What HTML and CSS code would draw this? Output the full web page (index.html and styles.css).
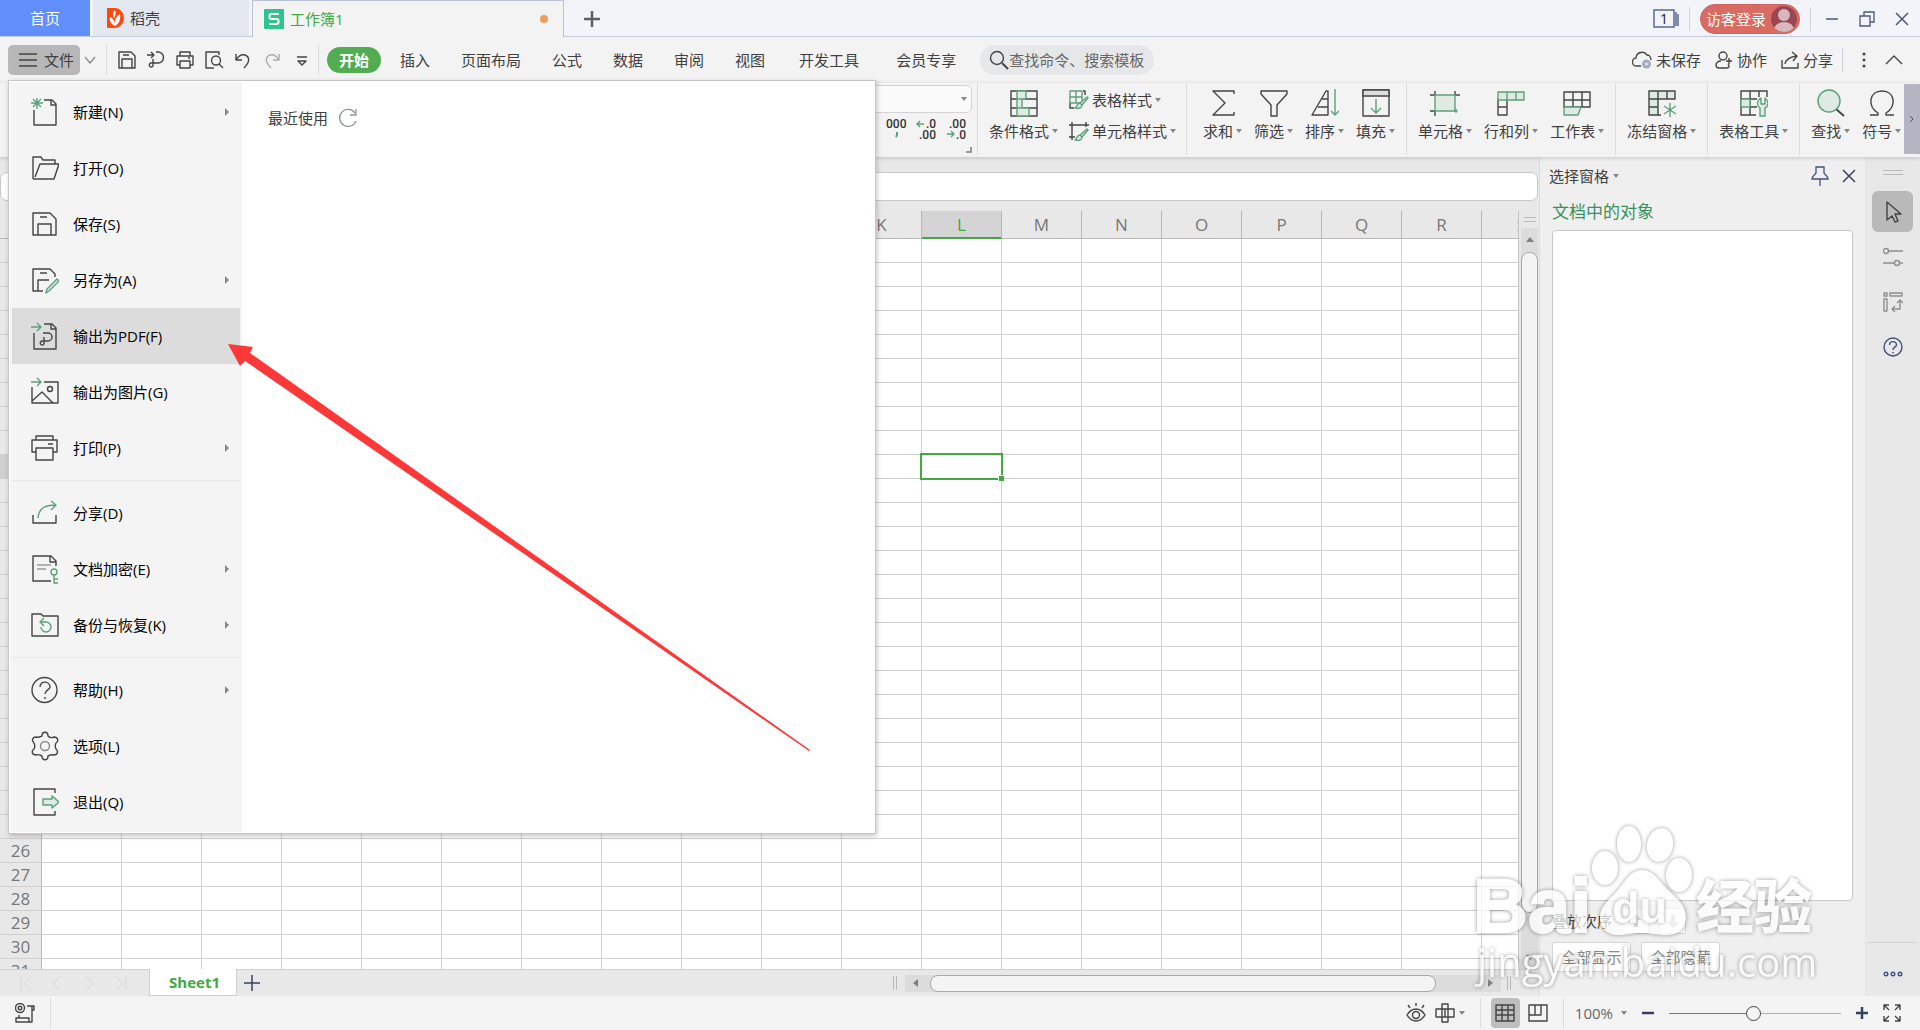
FILE: index.html
```html
<!DOCTYPE html>
<html lang="zh-CN">
<head>
  <meta charset="UTF-8" />
  <title>工作簿1</title>
  <meta name="viewport" content="width=device-width, initial-scale=1.0" />
  <link rel="stylesheet" href="styles.css">
</head>
<body>
  <!-- Title bar -->
  <header class="titlebar">
    <button class="doc-tab home">首页</button>
    <button class="doc-tab docer">
      <svg width="17" height="20" viewBox="0 0 17 20"><path d="M1 0h7a9 10 0 0 1 0 20H1a1 1 0 0 1-1-1V1a1 1 0 0 1 1-1z" fill="#fb4a10"/><path d="M8 18C4 16 2 13 3 9c3 1 5 4 5 9zM8 18c-1-5 1-10 5-12 1 5-1 10-5 12zM7 10C5 7 6 4 8 2c1 3 1 5-1 8z" fill="#fff"/></svg>
      稻壳
    </button>
    <button class="doc-tab current">
      <svg width="20" height="20" viewBox="0 0 20 20"><rect width="20" height="20" rx="1" fill="#2fc48d"/><path d="M15 5H7.500a2 2 0 0 0-2 2v1a2 2 0 0 0 2 2h5a2 2 0 0 1 2 2v1a2 2 0 0 1-2 2H5" fill="none" stroke="#fff" stroke-width="2"/></svg>
      工作簿1
      <span class="dirty"></span>
    </button>
    <button class="icon-btn new-tab" aria-label="新建标签"><svg width="16" height="16" viewBox="0 0 16 16"><path d="M8 0v16M0 8h16" stroke="#5f5f5f" stroke-width="2.500"/></svg></button>

    <div class="window-tools">
      <button class="icon-btn" aria-label="窗口"><svg width="26" height="20" viewBox="0 0 26 20" fill="none" stroke="#5a6a90" stroke-width="1.500"><path d="M1 1h20v17H1zM23 3v14M25 5v12"/><text x="11" y="15" text-anchor="middle" font-size="14" fill="#222" stroke="none">1</text></svg></button>
      <i class="vline"></i>
      <button class="login">访客登录
        <svg width="26" height="26" viewBox="0 0 26 26"><defs><clipPath id="av"><circle cx="13" cy="13" r="13"/></clipPath></defs><g clip-path="url(#av)"><rect width="26" height="26" fill="#974852"/><circle cx="13" cy="9" r="6" fill="#d8b8bc"/><ellipse cx="13" cy="24" rx="10" ry="8" fill="#d8b8bc"/></g></svg>
      </button>
      <i class="vline"></i>
      <button class="icon-btn win" aria-label="最小化"><svg width="16" height="16" viewBox="0 0 16 16"><path d="M2 8h12" stroke="#49587e" stroke-width="1.500"/></svg></button>
      <button class="icon-btn win" aria-label="还原"><svg width="16" height="16" viewBox="0 0 16 16" fill="none" stroke="#49587e" stroke-width="1.300"><path d="M1 5h10v10H1zM5 5V1h10v10h-4"/></svg></button>
      <button class="icon-btn win" aria-label="关闭"><svg width="16" height="16" viewBox="0 0 16 16"><path d="M2 2l12 12M14 2L2 14" stroke="#49587e" stroke-width="1.500"/></svg></button>
    </div>
  </header>

  <!-- Menu bar -->
  <nav class="menubar">
    <button class="file-btn"><svg class="ico" width="18" height="16" viewBox="0 0 18 16"><path d="M0 2h18M0 8h18M0 14h18"/></svg>文件</button>
    <button class="icon-btn file-more" aria-label="更多"><svg width="12" height="8" viewBox="0 0 12 8" fill="none" stroke="#8a8a8a" stroke-width="1.300"><path d="M1 1l5 6 5-6"/></svg></button>
    <div class="quick">
      <button class="icon-btn" aria-label="保存"><svg class="ico" width="20" height="20" viewBox="0 0 20 20"><path d="M2 2h12l4 4v12H2zM5 18V9h10v9M6 5h6"/></svg></button>
      <button class="icon-btn" aria-label="输出为PDF"><svg class="ico" width="20" height="20" viewBox="0 0 20 20"><path d="M1 5h6M5 2l3 3-3 3M10 2h2a5 5 0 0 1 0 11H5a2 2 0 1 0 2 3V9"/></svg></button>
      <button class="icon-btn" aria-label="打印"><svg class="ico" width="20" height="20" viewBox="0 0 20 20"><path d="M5 6V2h10v4M5 15H2V6h16v9h-3M5 11h10v7H5zM13 8h2"/></svg></button>
      <button class="icon-btn" aria-label="打印预览"><svg class="ico" width="20" height="20" viewBox="0 0 20 20"><path d="M15 5V2H2v16h8M15 14l4 4"/><circle cx="12" cy="10.500" r="4.500"/></svg></button>
      <button class="icon-btn" aria-label="撤销"><svg class="ico" width="20" height="20" viewBox="0 0 20 20"><path d="M3 4v6h6M3 10c3-5 6-6 9-5 5 2 5 7-1 13"/></svg></button>
      <button class="icon-btn dim" aria-label="恢复"><svg class="ico" width="20" height="20" viewBox="0 0 20 20"><path d="M17 4v6h-6M17 10c-3-5-6-6-9-5-5 2-5 7 1 13"/></svg></button>
      <button class="icon-btn" aria-label="自定义"><svg class="ico" width="20" height="20" viewBox="0 0 20 20"><path d="M6 7h10M7 11h8l-4 4z"/></svg></button>
    </div>
    <div class="tabs">
      <button class="tab active">开始</button>
      <button class="tab">插入</button>
      <button class="tab">页面布局</button>
      <button class="tab">公式</button>
      <button class="tab">数据</button>
      <button class="tab">审阅</button>
      <button class="tab">视图</button>
      <button class="tab addin">开发工具</button>
      <button class="tab addin">会员专享</button>
    </div>
    <label class="search">
      <svg class="ico" width="20" height="20" viewBox="0 0 20 20"><circle cx="8" cy="8" r="6.500"/><path d="M13 13l6 6" stroke-width="2"/></svg>
      <input type="text" placeholder="查找命令、搜索模板" aria-label="查找命令">
    </label>
    <div class="share-tools">
      <button class="icon-btn"><svg class="ico" width="20" height="20" viewBox="0 0 20 20"><path d="M9 16H5a4 4 0 0 1-1-8 6 6 0 0 1 11-3c3 0 4 3 4 5"/><circle cx="14.500" cy="14" r="4.500" fill="#a3abbb" stroke="none"/><path d="M13 12.500l3 3m0-3l-3 3" stroke="#fff" stroke-width="1"/></svg>未保存</button>
      <button class="icon-btn"><svg class="ico" width="18" height="18" viewBox="0 0 18 18"><circle cx="8" cy="5" r="4"/><path d="M6 10c-3 0-5 2-5 4s1 3 3 3h8c2 0 3-2 1-4M11 10h6M14 7v6"/></svg>协作</button>
      <button class="icon-btn"><svg class="ico" width="18" height="18" viewBox="0 0 18 18"><path d="M1 9v8h16v-5M4 13c1-5 5-7 11-8M11 1l5 4-4 5"/></svg>分享</button>
      <i class="vline"></i>
      <button class="icon-btn" aria-label="更多"><svg width="4" height="18" viewBox="0 0 4 18" fill="#444"><circle cx="2" cy="3" r="1.500"/><circle cx="2" cy="9" r="1.500"/><circle cx="2" cy="15" r="1.500"/></svg></button>
      <button class="icon-btn" aria-label="收起"><svg class="ico" width="18" height="10" viewBox="0 0 18 10"><path d="M1 9l8-8 8 8"/></svg></button>
    </div>
  </nav>

  <!-- Ribbon -->
  <section class="ribbon">
    <div class="number-group">
      <label class="format-box"><select aria-label="数字格式"><option></option></select><span class="caret"></span></label>
      <div class="number-btns">
        <button class="icon-btn" aria-label="千位分隔"><svg class="num" width="24" height="24" viewBox="0 0 24 24"><text x="1" y="11">000</text><path d="M12 15v3l-1 2" class="g" stroke-width="2"/></svg></button>
        <button class="icon-btn" aria-label="增加小数位"><svg class="num" width="24" height="24" viewBox="0 0 24 24"><path d="M9 7H2M5 4L2 7l3 3" class="g"/><text x="11" y="11">.0</text><text x="4" y="22">.00</text></svg></button>
        <button class="icon-btn" aria-label="减少小数位"><svg class="num" width="24" height="24" viewBox="0 0 24 24"><text x="4" y="11">.00</text><path d="M2 17h7M6 14l3 3-3 3" class="g"/><text x="11" y="22">.0</text></svg></button>
      </div>
      <svg class="launcher" width="6" height="6" viewBox="0 0 6 6"><path d="M5 0v5H0" fill="none" stroke="#999" stroke-width="2"/></svg>
    </div>
    <i class="sep"></i>
    <button class="tool"><svg class="ico" width="28" height="28" viewBox="0 0 28 28"><path d="M1 2h26v25H1zM1 10h26M1 19h26"/><path d="M7 2h9v8H7zM7 10h5v9H7zM7 19h12v8H7z" class="g tint"/></svg><span class="label">条件格式<i class="caret"></i></span></button>
    <div class="tool-stack">
      <button class="tool-row"><svg class="ico" width="20" height="20" viewBox="0 0 20 20"><path d="M14 1h2v4M1 13v5h4"/><path d="M1 1h12v12H1zM7 1v12M1 7h12" class="g"/><path d="M18 7l-7 6 2 2 6-7zM11 13c-3 0-3 4-5 5 4 1 7 0 7-3" class="g tint"/></svg>表格样式<i class="caret"></i></button>
      <button class="tool-row"><svg class="ico" width="20" height="20" viewBox="0 0 20 20"><path d="M0 4h20M3 1v18M17 1v5M0 16h6"/><path d="M18 8l-7 6 2 2 6-7zM11 14c-3 0-3 4-5 5 4 1 7 0 7-3" class="g tint"/></svg>单元格样式<i class="caret"></i></button>
    </div>
    <i class="sep wide"></i>
    <button class="tool"><svg class="ico" width="28" height="28" viewBox="0 0 28 28"><path d="M25 5V2H4l12 12L4 26h21v-3"/></svg><span class="label">求和<i class="caret"></i></span></button>
    <button class="tool"><svg class="ico" width="28" height="28" viewBox="0 0 28 28"><path d="M1 2h26v3L17 16v11h-6V16L1 5z"/></svg><span class="label">筛选<i class="caret"></i></span></button>
    <button class="tool"><svg class="ico" width="28" height="28" viewBox="0 0 28 28"><path d="M1 26L15 2h2v24zM11 10h6M7 18h10"/><path d="M24 0v26M20 22l4 4 4-4" class="g"/></svg><span class="label">排序<i class="caret"></i></span></button>
    <button class="tool"><svg class="ico" width="28" height="28" viewBox="0 0 28 28"><path d="M1 1h26v26H1z"/><path d="M1 1h26v6H1z" fill="#ddd"/><path d="M14 10v14M9 19l5 5 5-5" class="g"/></svg><span class="label">填充<i class="caret"></i></span></button>
    <i class="sep"></i>
    <button class="tool"><svg class="ico" width="30" height="28" viewBox="0 0 30 28"><path d="M0 6h5V2M25 2v4h5M5 22v5M0 22h5"/><path d="M5 6h20v16H5z" class="g tint"/><circle cx="26" cy="22" r="1" class="g"/></svg><span class="label">单元格<i class="caret"></i></span></button>
    <button class="tool"><svg class="ico" width="28" height="28" viewBox="0 0 28 28"><path d="M1 10h9v16H1zM1 18h9"/><path d="M1 3h26v8H1zM10 3v8M19 3v8" class="g tint"/></svg><span class="label">行和列<i class="caret"></i></span></button>
    <button class="tool"><svg class="ico" width="28" height="28" viewBox="0 0 28 28"><path d="M1 3h26v15H1zM10 3v15M19 3v15M1 11h26"/><path d="M1 18h17l-3 8H1z" class="g tint"/></svg><span class="label">工作表<i class="caret"></i></span></button>
    <i class="sep"></i>
    <button class="tool"><svg class="ico" width="28" height="28" viewBox="0 0 28 28"><path d="M1 2h26v8H10v16H1z" class="tint-only"/><path d="M10 26h3M10 2v8M1 10h9M1 18h9M19 2v8"/><path d="M22 14v14M16 17l12 8M28 17l-12 8" class="g"/></svg><span class="label">冻结窗格<i class="caret"></i></span></button>
    <i class="sep"></i>
    <button class="tool"><svg class="ico" width="28" height="28" viewBox="0 0 28 28"><path d="M27 8V2H1v24h15M1 10h16M10 2v24M19 2v6M10 18h7"/><path d="M1 10h9v8H1z" class="g tint"/><path d="M21 9c-5 3-4 8-1 10v8h5v-8c4-2 4-7 0-10v6h-4z" class="g tint"/></svg><span class="label">表格工具<i class="caret"></i></span></button>
    <i class="sep"></i>
    <button class="tool"><svg class="ico" width="28" height="28" viewBox="0 0 28 28"><path d="M19 20l8 7" stroke-width="2"/><circle cx="12" cy="12" r="11" class="g tint"/></svg><span class="label">查找<i class="caret"></i></span></button>
    <button class="tool last"><svg class="ico" width="28" height="28" viewBox="0 0 28 28"><path d="M2 26h8v-2C-1 17 1 2 14 2s15 15 4 22v2h8"/></svg><span class="label">符号<i class="caret"></i></span></button>
    <button class="ribbon-next" aria-label="下一页"><svg width="6" height="8" viewBox="0 0 6 8"><path d="M1 1l3 3-3 3" fill="none" stroke="#555"/></svg></button>
  </section>

  <main class="workspace">
    <!-- Sheet -->
    <section class="book">
      <div class="formula"><input type="text" aria-label="编辑栏"></div>
      <div class="grid-area">
        <div class="grid-wrap"><table class="grid"><thead><tr id="cols"><th class="corner"></th></tr></thead><tbody id="rows"></tbody></table></div>
        <div class="vscroll">
          <i class="grip"></i>
          <div class="vtrack"><i class="arrow up"></i><i class="thumb"></i><i class="arrow down"></i></div>
        </div>
      </div>
      <div class="sheetbar">
        <div class="sheet-nav">
          <svg width="108" height="16" viewBox="0 0 108 16" fill="none" stroke="#d9d9d9"><path d="M1 1v14M11 1L4 8l7 7M40 1l-7 7 7 7M66 1l7 7-7 7M96 1l7 7-7 7M106 1v14"/></svg>
        </div>
        <button class="sheet-tab">Sheet1</button>
        <button class="icon-btn add-sheet" aria-label="新建工作表"><svg width="16" height="16" viewBox="0 0 16 16"><path d="M8 0v16M0 8h16" stroke="#36415f" stroke-width="1.500"/></svg></button>
        <div class="hscroll">
          <i class="split"></i>
          <div class="htrack"><i class="arrow left"></i><i class="thumb"></i><i class="arrow right"></i></div>
          <i class="split"></i>
        </div>
      </div>
    </section>

    <!-- Selection pane -->
    <aside class="pane">
      <div class="pane-head">
        <button class="pane-title">选择窗格<i class="caret"></i></button>
        <button class="icon-btn" aria-label="固定"><svg width="18" height="20" viewBox="0 0 18 20" fill="none" stroke="#44507a" stroke-width="1.300"><path d="M5 1h8v6c1 2 4 3 4 6H1c0-3 3-4 4-6zM9 13v7"/></svg></button>
        <button class="icon-btn" aria-label="关闭"><svg width="14" height="14" viewBox="0 0 14 14"><path d="M1 1l12 12M13 1L1 13" stroke="#36415f" stroke-width="1.500"/></svg></button>
      </div>
      <h2>文档中的对象</h2>
      <div class="objects"></div>
      <div class="order">
        <span>叠放次序</span>
        <button aria-label="上移"><svg width="12" height="14" viewBox="0 0 12 14"><path d="M6 0l6 6H8v7H4V6H0z" fill="#777"/></svg></button>
        <button aria-label="下移"><svg width="12" height="14" viewBox="0 0 12 14"><path d="M6 14L0 8h4V1h4v7h4z" fill="#c4c4c4"/></svg></button>
      </div>
      <div class="show-hide">
        <button>全部显示</button>
        <button>全部隐藏</button>
      </div>
    </aside>

    <!-- Side tool strip -->
    <aside class="strip">
      <i class="grip"></i>
      <button class="strip-btn active" aria-label="选择"><svg class="ico" width="20" height="22" viewBox="0 0 20 22"><path d="M4 1v18l5-4 3 6 3-1-3-7h6z"/></svg></button>
      <button class="strip-btn" aria-label="属性"><svg class="ico grey" width="20" height="20" viewBox="0 0 20 20"><circle cx="3" cy="4" r="2.500"/><circle cx="14" cy="16" r="2.500"/><path d="M6 4h14M0 16h11M17 16h3"/></svg></button>
      <button class="strip-btn" aria-label="转置"><svg class="ico grey" width="20" height="20" viewBox="0 0 20 20"><path d="M1 1h3v3H1zM7 1h12v3H7zM1 7h3v12H1zM17 8v9H9M14 11l3-3 3 3M12 14l-3 3 3 3"/></svg></button>
      <button class="strip-btn" aria-label="帮助"><svg class="ico navy" width="20" height="20" viewBox="0 0 20 20"><circle cx="10" cy="10" r="9"/><path d="M6.500 8c0-5 7-4 7 0 0 2-3.500 2-3.500 5M10 15v1.500"/></svg></button>
      <button class="strip-btn more" aria-label="更多"><svg class="ico navy" width="20" height="8" viewBox="0 0 20 8"><circle cx="3" cy="4" r="1.800"/><circle cx="10" cy="4" r="1.800"/><circle cx="17" cy="4" r="1.800"/></svg></button>
    </aside>
  </main>

  <!-- Status bar -->
  <footer class="statusbar">
    <button class="icon-btn" aria-label="宏"><svg class="ico" width="20" height="20" viewBox="0 0 20 20"><circle cx="5" cy="5" r="4.500"/><circle cx="5" cy="5" r="1.800"/><path d="M12 3h7v4h-2v12H1v-4h13v4M4 12v3M17 3v5"/></svg></button>
    <div class="status-group views">
      <button class="icon-btn" aria-label="护眼模式"><svg class="ico" width="20" height="20" viewBox="0 0 20 20"><path d="M1 12c5-8 13-8 18 0-5 8-13 8-18 0zM10 0v3M2 2l2 3M18 2l-2 3"/><circle cx="10" cy="12" r="3.500"/></svg></button>
      <button class="icon-btn" aria-label="阅读模式"><svg class="ico" width="20" height="20" viewBox="0 0 20 20"><path d="M7 1h6v18H7zM1 6h18v8H1zM10 6v8"/></svg><i class="caret"></i></button>
    </div>
    <div class="status-group modes">
      <button class="icon-btn mode" aria-label="普通视图"><svg class="ico" width="20" height="18" viewBox="0 0 20 18"><path d="M1 1h18v16H1zM1 6h18M1 11h18M7 1v16M13 1v16"/></svg></button>
      <button class="icon-btn" aria-label="分页预览"><svg class="ico" width="20" height="18" viewBox="0 0 20 18"><path d="M1 1h18v16H1zM7 1v10M13 1v10H1"/></svg></button>
    </div>
    <div class="status-group zoom">
      <button class="zoom-value">100%<i class="caret"></i></button>
      <button class="icon-btn" aria-label="缩小"><svg width="12" height="12" viewBox="0 0 12 12"><path d="M0 6h12" stroke="#36415f" stroke-width="2.500"/></svg></button>
      <input type="range" min="0" max="100" value="49" aria-label="缩放">
      <button class="icon-btn" aria-label="放大"><svg width="12" height="12" viewBox="0 0 12 12"><path d="M0 6h12M6 0v12" stroke="#36415f" stroke-width="2.500"/></svg></button>
      <button class="icon-btn" aria-label="全屏"><svg class="ico" width="18" height="18" viewBox="0 0 18 18"><path d="M1 6V1h5M1 1l5 5M12 1h5v5M17 1l-5 5M1 12v5h5M1 17l5-5M17 12v5h-5M17 17l-5-5"/></svg></button>
    </div>
  </footer>

  <!-- File menu -->
  <div class="file-menu">
    <div class="menu-list">
      <button class="menu-item more"><svg class="ico" width="28" height="30" viewBox="0 0 28 30"><path d="M13 3h8l4 4v21H3V13M20 3v5h5"/><path d="M6 1v11M0 6h12M2 2l8 8M10 2l-8 8" class="g"/></svg>新建(N)</button>
      <button class="menu-item"><svg class="ico" width="28" height="30" viewBox="0 0 28 30"><path d="M2 26V4h8l2 3h12v4M2 26h21l5-15H9L4 24"/></svg>打开(O)</button>
      <button class="menu-item"><svg class="ico" width="28" height="30" viewBox="0 0 28 30"><path d="M2 4h17l6 6v16H2zM7 26V15h13v11M9 8h7"/></svg>保存(S)</button>
      <button class="menu-item more"><svg class="ico" width="28" height="30" viewBox="0 0 28 30"><path d="M12 26H2V4h17l5 5v3M7 26V15h11M9 8h7"/><path d="M15 28l1-4 10-10 2 2-10 10z" class="g tint"/></svg>另存为(A)</button>
      <button class="menu-item active"><svg class="ico" width="28" height="30" viewBox="0 0 28 30"><path d="M13 3h8l4 4v21H3V12M20 3v5h5M12 12h5a3 3 0 0 1 0 8h-6a2 2 0 1 0 2 3v-7"/><path d="M0 6h10M6 2l4 4-4 4" class="g"/></svg>输出为PDF(F)</button>
      <button class="menu-item"><svg class="ico" width="28" height="30" viewBox="0 0 28 30"><path d="M13 5h14v21H1V10M1 24l10-9 11 11"/><circle cx="19" cy="12" r="2.500"/><path d="M0 5h10M6 1l4 4-4 4" class="g"/></svg>输出为图片(G)</button>
      <button class="menu-item more"><svg class="ico" width="28" height="30" viewBox="0 0 28 30"><path d="M5 7V3h17v4M5 19H1V7h25v12h-4M5 15h17v12H5zM17 11h5"/></svg>打印(P)</button>
      <hr>
      <button class="menu-item"><svg class="ico" width="28" height="30" viewBox="0 0 28 30"><path d="M2 17v8h23v-8"/><path d="M7 20C8 10 14 7 25 7M20 3l5 4-5 5" class="g"/></svg>分享(D)</button>
      <button class="menu-item more"><svg class="ico" width="28" height="30" viewBox="0 0 28 30"><path d="M20 27H2V2h18l5 5v5M19 2v6h6"/><path d="M6 11h14M6 15h9" stroke="#999"/><circle cx="23" cy="18" r="3" class="g"/><path d="M23 21v8h4M23 25h4" class="g"/></svg>文档加密(E)</button>
      <button class="menu-item more"><svg class="ico" width="28" height="30" viewBox="0 0 28 30"><path d="M1 26V4h9l2 2h15v20z"/><path d="M10 12h5a5 5 0 1 1-5 5M13 8l-4 4 4 4" class="g"/></svg>备份与恢复(K)</button>
      <hr>
      <button class="menu-item more"><svg class="ico" width="28" height="30" viewBox="0 0 28 30"><circle cx="13.500" cy="15" r="12.500"/><path d="M9 12c0-7 10-6 10 0 0 3-5 3-5 7M14 22v2"/></svg>帮助(H)</button>
      <button class="menu-item"><svg class="ico" width="28" height="30" viewBox="0 0 28 30"><path d="M11 5c0-5 6-5 6 0 2 2 4 2 6 1 4 0 5 4 2 6-1 2-1 4 0 6 3 3 1 6-2 6-3-1-4 0-6 1 0 5-6 5-6 0-2-1-4-2-6-1-4 0-5-4-2-6 1-2 1-4 0-6-3-3-1-6 2-6 3 1 4 0 6-1z"/><circle cx="14" cy="15" r="4.500" stroke="#888"/></svg>选项(L)</button>
      <button class="menu-item"><svg class="ico" width="28" height="30" viewBox="0 0 28 30"><path d="M24 6V2H3v26h21v-4"/><path d="M12 12h9V9l7 6-7 6v-3h-9z" class="g tint"/></svg>退出(Q)</button>
    </div>
    <div class="recent">
      最近使用
      <button class="icon-btn" aria-label="刷新"><svg width="20" height="20" viewBox="0 0 20 20" fill="none" stroke="#8d93a0" stroke-width="1.300"><path d="M18 13a8.500 8.500 0 1 1-1-8M18 1v6h-6"/></svg></button>
    </div>
  </div>

  <!-- Red pointer arrow -->
  <svg class="pointer" width="584" height="410" viewBox="0 0 584 410"><path d="M0 1l25 3-3 6 560 397-1 1L17 18l-5 5z" fill="#fc3838"/></svg>

  <!-- Watermark -->
  <svg class="watermark" width="360" height="172" viewBox="0 0 360 172">
    <g class="wm-shape">
      <ellipse cx="135" cy="50" rx="13" ry="17"/>
      <ellipse cx="159" cy="26" rx="12" ry="18"/>
      <ellipse cx="190" cy="27" rx="13" ry="17" transform="rotate(12 190 27)"/>
      <ellipse cx="209" cy="57" rx="13" ry="17"/>
      <path d="M172 52c12 0 18 12 26 20 10 9 18 16 18 27 0 14-10 18-20 18-8 0-14-2-24-2s-16 2-24 2c-10 0-18-6-18-18 0-11 10-18 18-27 7-8 12-20 24-20z"/>
      <text class="wm-logo" x="3" y="114">Bai</text>
      <text class="wm-zh" x="226" y="110">经验</text>
      <text class="wm-url" x="7" y="159">jingyan.baidu.com</text>
    </g>
    <text class="wm-du" x="142" y="105">du</text>
  </svg>

  <script>
    const cols = "ABCDEFGHIJKLMNOPQRS".split("");
    const current = { col: "L", row: 10 };

    const head = document.getElementById("cols");
    cols.forEach((c) => {
      const th = document.createElement("th");
      th.textContent = c;
      if (c === current.col) th.className = "on";
      head.appendChild(th);
    });

    const body = document.getElementById("rows");
    for (let r = 1; r <= 31; r++) {
      const tr = document.createElement("tr");
      const th = document.createElement("th");
      th.textContent = r;
      if (r === current.row) th.className = "on";
      tr.appendChild(th);
      cols.forEach((c) => {
        const td = document.createElement("td");
        if (r === current.row && c === current.col) td.className = "cursor";
        tr.appendChild(td);
      });
      body.appendChild(tr);
    }
  </script>
</body>
</html>
```
FILE: styles.css
```css
/* ---------- 1. TOKENS ---------- */
:root{
  --bar:#f3f3f3;
  --frame:#e8e8e8;
  --line:#dcdcdc;
  --grid:#d0d0d0;
  --green:#40a940;
  --icon:#444;
  --icon-green:#5ea07c;
  --text:#404040;
}

/* ---------- 2. RESET ---------- */
*,*::before,*::after{box-sizing:border-box;}
body{
  margin:0;
  height:100vh;
  display:flex;
  flex-direction:column;
  position:relative;
  overflow:hidden;
  background:var(--bar);
  color:var(--text);
  font:15px/20px "Open Sans","Noto Sans CJK SC",sans-serif;
}
button,input,select{font:inherit;color:inherit;}
button{
  border:0;
  padding:0;
  background:none;
  white-space:nowrap;
  cursor:pointer;
}
svg{display:block;flex:none;}
i{display:block;flex:none;}
.icon-btn{display:flex;align-items:center;gap:4px;}

.ico{fill:none;stroke:var(--icon);stroke-width:1.4;stroke-linejoin:round;}
.ico.grey{stroke:#8f8f8f;}
.ico.navy{stroke:#44507a;}
.g{stroke:var(--icon-green);fill:none;}
.tint,.tint-only{fill:#dfeae3;}

.caret{
  display:inline-block;
  border:3px solid transparent;
  border-top:4px solid #868686;
  border-bottom:0;
}
.vline{width:1px;height:24px;background:#d0d3da;}

/* ---------- 3. TITLE BAR ---------- */
.titlebar{
  height:37px;
  flex:none;
  display:flex;
  background:#f2f4f9;
  box-shadow:inset 0 -1px #c2cbdc;
}
.doc-tab{display:flex;align-items:center;gap:6px;height:36px;}
.home{width:90px;justify-content:center;background:#608ffc;color:#fff;}
.docer{width:156px;margin-left:3px;padding-left:14px;background:#e3e7f0;}
.current{
  width:312px;
  height:37px;
  margin-left:3px;
  padding:0 15px 0 11px;
  border:1px solid #b9c2d6;
  border-bottom:0;
  background:var(--bar);
  color:var(--green);
}
.dirty{width:8px;height:8px;border-radius:50%;margin-left:auto;background:#e8a05c;}
.new-tab{margin-left:20px;}
.window-tools{display:flex;align-items:center;margin-left:auto;padding-right:10px;gap:10px;}
.login{
  display:flex;
  align-items:center;
  gap:5px;
  height:30px;
  padding:0 2px 0 5px;
  border:1px solid #c9635c;
  border-radius:15px;
  background:#da6b62;
  color:#fff;
}
.win{width:16px;margin-left:3px;}
.win + .win{margin-left:9px;}

/* ---------- 4. MENU BAR ---------- */
.menubar{height:46px;flex:none;display:flex;align-items:center;padding-left:8px;}
.file-btn{
  display:flex;
  align-items:center;
  gap:7px;
  height:30px;
  width:72px;
  padding-left:11px;
  border-radius:5px;
  background:#b7b7b7;
}
.file-more{margin:0 10px 0 4px;}
.quick{
  display:flex;
  align-items:center;
  gap:9px;
  height:30px;
  padding:0 7px 0 10px;
  border-left:1px solid var(--line);
  border-right:1px solid var(--line);
}
.dim{opacity:.4;}
.tabs{display:flex;gap:1px;margin-left:8px;}
.tab{height:26px;padding:0 15px;}
.tab.active{
  padding:0 12px;
  margin-right:3px;
  border-radius:13px;
  background:#52ac52;
  color:#fff;
  font-weight:700;
}
.addin{padding:0 18px;}
.search{
  display:flex;
  align-items:center;
  width:174px;
  height:30px;
  margin-left:6px;
  padding-left:9px;
  border-radius:15px;
  background:#e6e7e9;
}
.search input{width:142px;border:0;padding:0;background:none;outline:0;}
.search input::placeholder{color:#666;opacity:1;}
.share-tools{display:flex;align-items:center;gap:14px;margin-left:auto;padding-right:17px;}
.share-tools .vline{margin:0 5px 0 -5px;}
.share-tools .icon-btn:last-child{margin-left:5px;}

/* ---------- 5. RIBBON ---------- */
.ribbon{
  position:relative;
  z-index:1;
  height:74px;
  flex:none;
  display:flex;
  gap:12px;
  box-shadow:0 1px 4px rgba(0,0,0,.18);
  background:var(--bar);
}
.number-group{
  width:978px;
  margin-right:-12px;
  padding:2px 6px 0 0;
  display:flex;
  flex-direction:column;
  align-items:flex-end;
  flex:none;
}
.format-box{
  display:flex;
  align-items:center;
  width:160px;
  height:28px;
  padding-right:4px;
  border:1px solid #d3d3d3;
  border-radius:5px;
  background:#fafafa;
}
.format-box select{flex:1;appearance:none;border:0;background:none;outline:0;}
.number-btns{display:flex;gap:6px;margin:4px 3px 0 0;}
.num{fill:none;stroke-width:1.4;}
.num text{font:500 12px/12px Roboto,sans-serif;fill:#333;}
.launcher{margin-top:6px;}
.sep{width:1px;height:72px;margin:0 -1px;background:var(--line);}
.sep.wide{margin:0 4px 0 -2px;}
.tool{display:flex;flex-direction:column;align-items:center;gap:4px;padding-top:6px;height:64px;}
.tool.last{margin-right:-10px;}
.label,.tool-row,.pane-title,.zoom-value{display:flex;align-items:center;gap:3px;}
.tool-stack{display:flex;flex-direction:column;gap:11px;margin-left:-1px;padding-top:7px;}
.tool-row{height:20px;}
.ribbon-next{
  display:flex;
  align-items:center;
  justify-content:center;
  width:16px;
  height:70px;
  margin:1px 0 0 auto;
  flex:none;
  background:#b3b6c2;
}

/* ---------- 6. SHEET ---------- */
.workspace{flex:1;min-height:0;display:flex;background:var(--frame);}
.book{flex:1;min-width:0;display:flex;flex-direction:column;border-right:1px solid var(--line);}
.formula{padding:15px 1px 10px 0;}
.formula input{
  display:block;
  width:100%;
  height:29px;
  border:1px solid #c8c8c8;
  border-radius:7px;
  background:#fff;
  outline:0;
}
.grid-area{flex:1;min-height:0;display:flex;}
.grid-wrap{flex:1;min-width:0;overflow:hidden;border-right:1px solid #c4c4c4;background:#fff;}
.grid{width:1562px;table-layout:fixed;border-collapse:separate;border-spacing:0;color:#777;font-size:17px;}
.grid th,.grid td{width:80px;height:24px;padding:0;border:solid var(--grid);border-width:0 1px 1px 0;font-weight:400;line-height:22px;}
.grid thead th{height:28px;border-color:#b8b8b8;background:var(--frame);}
.grid th:first-child{width:42px;border-right-color:#b8b8b8;background:var(--frame);}
.grid thead th.on{background:#d4d4d4;color:var(--green);box-shadow:inset 0 -1px var(--green);border-bottom-color:var(--green);}
.grid tbody th.on{background:#d0d0d0;color:var(--green);}
.cursor{position:relative;}
.cursor::before{content:'';position:absolute;inset:-2px;border:2px solid var(--green);}
.cursor::after{
  content:'';
  position:absolute;
  right:-3px;
  bottom:-3px;
  width:6px;
  height:6px;
  border:solid #fff;
  border-width:1px 0 0 1px;
  background:var(--green);
}

/* scrollbars */
.vscroll{width:20px;padding-right:1px;display:flex;flex-direction:column;align-items:flex-end;}
.grip{height:5px;width:20px;border:solid #b9b9b9;border-width:1px 0;}
.vscroll .grip{width:12px;margin:6px 2px;}
.vtrack,.htrack{flex:1;display:flex;align-items:center;background:#dcdcdc;}
.vtrack{width:17px;flex-direction:column;padding:9px 0;}
.thumb{flex:1;border:1px solid #a8a8a8;border-radius:8px;background:#f4f4f4;}
.vtrack .thumb{width:17px;margin:10px 0 42px;}
.arrow{border:4px solid transparent;}
.up{border-top:0;border-bottom:5px solid #808080;}
.down{border-bottom:0;border-top:5px solid #808080;}
.left{border-left:0;border-right:5px solid #808080;}
.right{border-right:0;border-left:5px solid #808080;}

.sheetbar{height:27px;flex:none;display:flex;border-top:1px solid var(--grid);}
.sheet-nav{width:149px;padding:5px 0 0 20px;}
.sheet-tab{
  width:88px;
  margin-top:-1px;
  padding-left:3px;
  border:1px solid var(--grid);
  border-top:0;
  background:#fff;
  color:var(--green);
  font-weight:700;
}
.add-sheet{margin-left:7px;}
.hscroll{display:flex;align-items:center;width:42%;margin-left:auto;padding-right:28px;}
.split{width:4px;height:14px;border:solid #b9b9b9;border-width:0 1px;}
.htrack{height:17px;margin:0 6px 0 8px;padding:0 8px;}
.htrack .thumb{height:17px;margin:0 52px 0 12px;}

/* ---------- 7. SIDE PANES ---------- */
.pane{width:325px;flex:none;display:flex;flex-direction:column;padding:9px 12px 24px;background:#efefef;}
.pane-head{display:flex;align-items:center;gap:13px;height:20px;}
.pane-head .icon-btn:last-child{margin-right:-3px;}
.pane-title{margin-right:auto;margin-left:-3px;gap:4px;}
.pane h2{margin:14px 0 6px;font-size:17px;line-height:24px;font-weight:400;color:#3a915c;}
.objects{flex:1;border:1px solid #c6c6c6;border-radius:4px;background:#fff;}
.order,.show-hide{display:flex;align-items:center;gap:10px;}
.order{margin:7px 0 8px;}
.order button{width:27px;height:26px;}
.order button,.show-hide button{
  display:flex;
  align-items:center;
  justify-content:center;
  border:1px solid #d4d4d4;
  border-radius:2px;
  background:#fff;
}
.show-hide button{width:79px;height:30px;color:#8a8a8a;}
.strip{
  width:55px;
  flex:none;
  display:flex;
  flex-direction:column;
  align-items:center;
  padding-top:13px;
}
.strip-btn{
  display:flex;
  align-items:center;
  justify-content:center;
  width:41px;
  height:41px;
  margin-bottom:4px;
  border-radius:6px;
}
.strip .grip{margin-bottom:16px;}
.strip-btn.active{background:#b9b9b9;}
.strip-btn.more{width:49px;height:54px;margin:auto 0 0;padding-top:9px;border-top:1px solid #d0d0d0;border-radius:0;}

/* ---------- 8. STATUS BAR ---------- */
.statusbar{height:34px;flex:none;display:flex;align-items:center;gap:15px;padding:0 19px 0 15px;background:#f4f4f4;}
.status-group{display:flex;align-items:center;height:30px;padding-left:10px;border-left:1px solid var(--line);}
.views{flex:1;justify-content:flex-end;gap:9px;}
.modes{gap:8px;}
.mode{width:29px;height:30px;justify-content:center;border-radius:4px;background:#bebebe;}
.zoom{gap:15px;padding-left:11px;}
.zoom-value{gap:8px;color:#666;}
.zoom input{
  width:172px;
  height:16px;
  margin:0;
  appearance:none;
  background:linear-gradient(90deg,#777 50%,#b0b0b0 50%) center/100% 1px no-repeat;
}
.zoom input::-webkit-slider-thumb{
  appearance:none;
  width:15px;
  height:15px;
  border:1px solid #444;
  border-radius:50%;
  background:#f4f4f4;
}

/* ---------- 9. FILE MENU ---------- */
.file-menu{
  position:absolute;
  z-index:2;
  left:8px;
  top:80px;
  width:868px;
  display:flex;
  padding:1px;
  border:1px solid #c6c6c6;
  background:#fff;
  box-shadow:1px 2px 5px rgba(0,0,0,.22);
}
.menu-list{width:232px;padding:2px;background:#f4f4f4;}
.menu-item{
  display:flex;
  align-items:center;
  gap:14px;
  width:228px;
  height:56px;
  padding:0 11px 0 19px;
  color:#000;
}
.menu-item.active{background:#dcdcdc;}
.menu-item.more::after{content:'';margin-left:auto;border:4px solid transparent;border-left-color:#868686;border-right:0;}
.menu-list hr{height:1px;margin:4px 0;border:0;background:#e9e9e9;}
.recent{display:flex;align-items:center;gap:10px;height:20px;margin:26px 0 0 26px;}

/* ---------- 10. OVERLAYS ---------- */
.pointer{position:absolute;z-index:3;left:228px;top:343px;pointer-events:none;}
.watermark{
  position:absolute;
  z-index:3;
  right:90px;
  bottom:40px;
  overflow:visible;
  pointer-events:none;
}
.wm-shape{fill:#fff;opacity:.72;filter:drop-shadow(0 0 2px rgba(0,0,0,.55));}
.wm-logo{font:700 76px "Liberation Sans",sans-serif;stroke:#fff;stroke-width:2;}
.wm-zh{font:900 58px "Noto Sans CJK SC",sans-serif;}
.wm-url{font:400 40px "Open Sans",sans-serif;}
.wm-du{font:700 45px "Liberation Sans",sans-serif;fill:#fff;opacity:.7;filter:drop-shadow(0 0 2px rgba(0,0,0,.5));}
```
